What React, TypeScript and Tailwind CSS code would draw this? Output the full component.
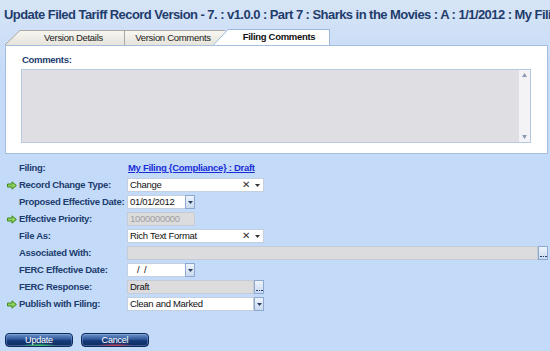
import React from "react";

const LABEL = "text-[9.5px] font-bold tracking-[-0.3px] text-[#1c3d6d]";
const VAL = "text-[9.5px] tracking-[-0.3px] text-[#111]";

function GreenArrow() {
  return (
    <svg width="10" height="9" viewBox="0 0 10 9">
      <path d="M0.5 3 H5 V0.8 L9.4 4.5 L5 8.2 V6 H0.5 Z" fill="#8fd05a" stroke="#3f8a1e" strokeWidth="1" strokeLinejoin="round" />
    </svg>
  );
}

function Row({ arrow, label, children }: { arrow?: boolean; label: string; children?: React.ReactNode }) {
  return (
    <div className="flex items-center h-[14px]">
      <div className="w-[14px] pl-[2px] flex items-center">{arrow ? <GreenArrow /> : null}</div>
      <div className={`w-[108px] whitespace-nowrap leading-[14px] ${LABEL}`}>{label}</div>
      <div className="flex items-center h-[14px]">{children}</div>
    </div>
  );
}

function DropTri({ color = "#333" }: { color?: string }) {
  return (
    <svg width="5" height="3" viewBox="0 0 5 3">
      <path d="M0 0 H5 L2.5 3 Z" fill={color} />
    </svg>
  );
}

function Combo({ text }: { text: string }) {
  return (
    <div className="w-[137px] h-[14px] bg-white border border-[#c4d0e0] flex items-center">
      <span className={`pl-[2px] flex-1 leading-[12px] ${VAL}`}>{text}</span>
      <span className="text-[10px] leading-[12px] text-[#333] mr-[5px]">✕</span>
      <span className="mr-[3px] flex items-center"><DropTri /></span>
    </div>
  );
}

function SideBtn({ kind }: { kind: "drop" | "dots" }) {
  return (
    <div className="w-[10px] h-[14px] border border-[#8ea9cf] bg-[linear-gradient(#eef4fc,#c9d9ef)] flex items-center justify-center relative">
      {kind === "drop" ? (
        <DropTri color="#2a3f63" />
      ) : (
        <span className="absolute bottom-[2px] left-[1px] flex gap-[1px]">
          <span className="w-[1.5px] h-[1.5px] bg-[#1f3c70]" />
          <span className="w-[1.5px] h-[1.5px] bg-[#1f3c70]" />
          <span className="w-[1.5px] h-[1.5px] bg-[#1f3c70]" />
        </span>
      )}
    </div>
  );
}

function DateBox({ text }: { text: string }) {
  return (
    <div className="w-[68px] h-[14px] bg-white border border-[#c4d0e0] flex items-center">
      <span className={`pl-[2px] flex-1 leading-[12px] whitespace-pre ${VAL}`}>{text}</span>
      <div className="-mr-[1px]"><SideBtn kind="drop" /></div>
    </div>
  );
}

function GlossBtn({ label, glow }: { label: string; glow: string }) {
  return (
    <div className="relative w-[68px] h-[14px] rounded-[4px] border border-[#0e2a5c] bg-[linear-gradient(#6f95cc_0%,#2d5699_45%,#163a78_55%,#0f2c62_100%)] overflow-hidden flex items-center justify-center shadow-[inset_0_0_0_1px_rgba(160,190,235,0.35)]">
      <span className="absolute left-[14px] right-[14px] bottom-[-3px] h-[6px] rounded-[50%]" style={{ background: `radial-gradient(ellipse at center, ${glow} 0%, transparent 70%)` }} />
      <span className="relative text-[9px] tracking-[-0.2px] text-white leading-[12px]">{label}</span>
    </div>
  );
}

export default function App() {
  return (
    <div className="w-[550px] h-[351px] overflow-hidden bg-[linear-gradient(#d6e4f6_0px,#cddff7_40px,#c3daf9_80px,#c3daf9_100%)] font-['Liberation_Sans',Arial,sans-serif]">
      {/* Title */}
      <div className="h-[30px] pl-[4px] pt-[7px] whitespace-nowrap overflow-hidden text-[13px] leading-[16px] font-bold tracking-[-0.55px] text-[#1f3d6c]">
        Update Filed Tariff Record Version - 7. : v1.0.0 : Part 7 : Sharks in the Movies : A : 1/1/2012 : My Filing
      </div>

      {/* Tabs */}
      <div className="flex h-[15px] ml-[5px] relative z-10">
        <div className="flex w-[120px] h-[15px]">
          <svg width="18" height="15" viewBox="0 0 18 15" className="shrink-0">
            <defs>
              <linearGradient id="tg" x1="0" y1="0" x2="0" y2="1">
                <stop offset="0" stopColor="#f7f6f1" />
                <stop offset="1" stopColor="#e6e4da" />
              </linearGradient>
            </defs>
            <path d="M0 15 L15 0.5 H18 V15 Z" fill="url(#tg)" />
            <path d="M0 15 L15 0.5 H18" fill="none" stroke="#a9a9a2" strokeWidth="1" />
          </svg>
          <div className="flex-1 border-t border-r border-[#a9a9a2] bg-[linear-gradient(#f7f6f1,#e6e4da)] flex items-center justify-center text-[9.5px] tracking-[-0.3px] text-[#222]">
            Version Details
          </div>
        </div>
        <div className="w-[100px] h-[15px] border-t border-[#a9a9a2] bg-[linear-gradient(#f7f6f1,#e6e4da)] flex items-center justify-center pr-[4px] text-[9.5px] tracking-[-0.3px] text-[#222]">
          Version Comments
        </div>
        <div className="flex h-[16px] -mt-[1px] -ml-[12px] relative">
          <svg width="16" height="16" viewBox="0 0 16 16" className="shrink-0">
            <path d="M0 16 L15 0.5 H16 V16 Z" fill="#ffffff" />
            <path d="M0.5 16 L15 0.5 H16" fill="none" stroke="#9fb9dc" strokeWidth="1" />
          </svg>
          <div className="w-[101px] h-[16px] bg-white border-t border-r border-[#9fb9dc] flex items-center justify-center pb-[1px] text-[9.5px] font-bold tracking-[-0.3px] text-[#111]">
            Filing Comments
          </div>
        </div>
      </div>

      {/* Panel */}
      <div className="ml-[5px] w-[543px] h-[109px] bg-white border border-[#a6bfdf]">
        <div className={`pl-[16px] pt-[8px] leading-[12px] ${LABEL}`}>Comments:</div>
        <div className="ml-[15px] mt-[3px] w-[510px] h-[74px] bg-[#dfdfe3] border border-[#b6c8e2] flex justify-end">
          <div className="w-[11px] h-full bg-[#f3f3f5] flex flex-col items-center justify-between py-[3px]">
            <svg width="5" height="4" viewBox="0 0 5 4"><path d="M0 4 L2.5 0 L5 4 Z" fill="#8c9bb3" /></svg>
            <svg width="5" height="4" viewBox="0 0 5 4"><path d="M0 0 L2.5 4 L5 0 Z" fill="#8c9bb3" /></svg>
          </div>
        </div>
      </div>

      {/* Form */}
      <div className="mt-[7px] ml-[5px] flex flex-col gap-[3px]">
        <Row label="Filing:">
          <span className="pl-[1px] text-[9.5px] font-bold tracking-[-0.3px] text-[#1a2fd6] underline leading-[14px]">
            My Filing {"{Compliance}"} : Draft
          </span>
        </Row>
        <Row arrow label="Record Change Type:">
          <Combo text="Change" />
        </Row>
        <Row label="Proposed Effective Date:">
          <DateBox text="01/01/2012" />
        </Row>
        <Row arrow label="Effective Priority:">
          <div className="w-[68px] h-[14px] bg-[#dcdcdf] border border-[#c6ccd6] flex items-center">
            <span className="pl-[2px] text-[9.5px] tracking-[-0.3px] text-[#a0a0a0] leading-[12px]">1000000000</span>
          </div>
        </Row>
        <Row label="File As:">
          <Combo text="Rich Text Format" />
        </Row>
        <Row label="Associated With:">
          <div className="w-[411px] h-[14px] bg-[#dcdcdf] border border-[#c6ccd6]" />
          <SideBtn kind="dots" />
        </Row>
        <Row label="FERC Effective Date:">
          <DateBox text={"   /  /"} />
        </Row>
        <Row label="FERC Response:">
          <div className="w-[127px] h-[14px] bg-[#dcdcdf] border border-[#c6ccd6] flex items-center">
            <span className={`pl-[2px] leading-[12px] ${VAL}`}>Draft</span>
          </div>
          <SideBtn kind="dots" />
        </Row>
        <Row arrow label="Publish with Filing:">
          <div className="w-[127px] h-[14px] bg-white border border-[#c4d0e0] flex items-center">
            <span className={`pl-[2px] leading-[12px] ${VAL}`}>Clean and Marked</span>
          </div>
          <SideBtn kind="drop" />
        </Row>
      </div>

      {/* Buttons */}
      <div className="flex gap-[8px] ml-[5px] mt-[22px]">
        <GlossBtn label="Update" glow="#3fcf6a" />
        <GlossBtn label="Cancel" glow="#d0405a" />
      </div>
    </div>
  );
}
